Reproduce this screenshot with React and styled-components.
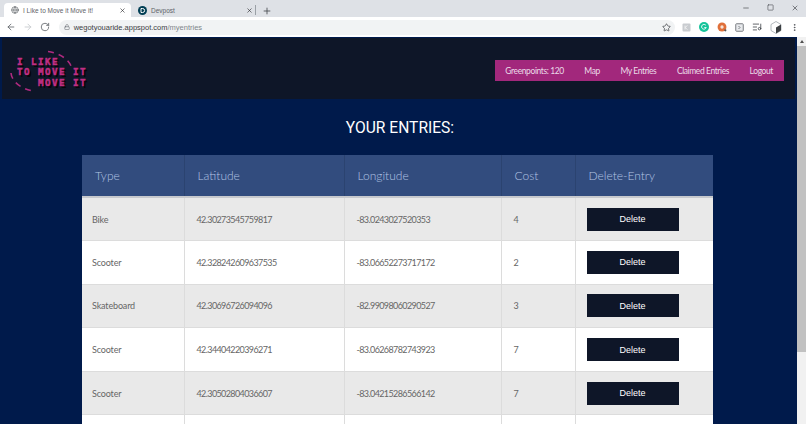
import React from "react";
import styled, { createGlobalStyle } from "styled-components";
import { Globe, X, Plus, ArrowLeft, ArrowRight, RotateCw, Lock, Star, Minus, Square, MoreVertical, ListMusic } from "lucide-react";

const GlobalStyle = createGlobalStyle`
  html, body {
    margin: 0;
    height: 100%;
    overflow: hidden;
    background: #001a4b;
    font-family: "Open Sans", sans-serif;
  }
  * { box-sizing: border-box; }
`;

const Window = styled.div`
  width: 806px;
  height: 424px;
  display: flex;
  flex-direction: column;
  overflow: hidden;
`;

const TabStrip = styled.div`
  height: 17px;
  background: #dee1e6;
  display: flex;
  align-items: flex-end;
  padding-left: 4px;
  color: #45484d;
  flex: none;
`;

const Tab = styled.div`
  width: 127px;
  height: 14px;
  padding: 0 5px 0 7px;
  display: flex;
  align-items: center;
  gap: 4px;
  border-radius: 4px 4px 0 0;
  background: ${(props) => (props.$active ? "#ffffff" : "transparent")};
  font-family: "Liberation Sans", sans-serif;
  font-size: 6.5px;
  color: #5f6368;
`;

const TabTitle = styled.span`
  flex: 1;
  white-space: nowrap;
`;

const TabDivider = styled.span`
  width: 1px;
  height: 10px;
  background: #9aa0a6;
  margin: 0 6px 2px -3px;
`;

const NewTab = styled.span`
  display: flex;
  margin-bottom: 1px;
`;

const WindowButtons = styled.div`
  margin-left: auto;
  align-self: flex-start;
  display: flex;
  gap: 17px;
  padding: 4px 7px 0 0;
`;

const Toolbar = styled.div`
  height: 20px;
  background: #ffffff;
  display: flex;
  align-items: center;
  padding: 0 7px 0 6px;
  gap: 7px;
  color: #5f6368;
  flex: none;
`;

const AddressBar = styled.div`
  width: 623px;
  height: 15px;
  margin-left: 2px;
  border-radius: 8px;
  background: #f1f3f4;
  display: flex;
  align-items: center;
  padding: 0 4px 0 5px;
  font-family: "Liberation Sans", sans-serif;
  font-size: 7.5px;
  gap: 4px;
  color: #3c4043;
`;

const UrlPath = styled.span`
  color: #80868b;
`;

const PushRight = styled.span`
  margin-left: auto;
  display: flex;
`;

const Extensions = styled.div`
  display: flex;
  align-items: center;
  gap: 8px;
`;

const Viewport = styled.div`
  flex: 1;
  display: flex;
  min-height: 0;
`;

const Page = styled.div`
  flex: 1;
  min-width: 0;
  background: #001a4b;
  padding-top: 1px;
`;

const Scrollbar = styled.div`
  width: 9px;
  flex: none;
  background: #f1f1f1;
  display: flex;
  flex-direction: column;
  align-items: center;
`;

const ScrollArrow = styled.span`
  height: 9px;
  width: 100%;
  display: flex;
  align-items: center;
  justify-content: center;

  &::before {
    content: "";
    border-left: 2.5px solid transparent;
    border-right: 2.5px solid transparent;
    border-bottom: 3px solid #505050;
  }
`;

const ScrollThumb = styled.span`
  width: 100%;
  height: 306px;
  background: #c1c1c1;
`;

const Header = styled.header`
  height: 61px;
  margin: 0 2px;
  background: #0e1628;
  display: flex;
  align-items: center;
  justify-content: space-between;
  padding: 0 11px 0 8px;
`;

const Logo = styled.div`
  position: relative;
  width: 84px;
  height: 48px;
  display: flex;
  flex-direction: column;
  padding: 12px 0 0 7px;
`;

const LogoRing = styled.svg`
  position: absolute;
  left: 0;
  top: 5px;
`;

const LogoLine = styled.span`
  position: relative;
  height: 10.7px;
  font-family: "DejaVu Sans Mono", monospace;
  font-weight: 700;
  font-size: 9.2px;
  line-height: 10.7px;
  letter-spacing: 1.46px;
  color: #c02f85;
  -webkit-text-stroke: 0.5px #c02f85;
  text-shadow: 1px 1px 0 #05060c, 2px 2px 0 #05060c;
  white-space: pre;
`;

const Nav = styled.nav`
  background: #a2287c;
  height: 21px;
  margin-top: 4px;
  display: flex;
  align-items: center;
  padding: 0 11px 0 10px;
  gap: 20.5px;
  font-family: "Lato", sans-serif;
  font-size: 8.5px;
  letter-spacing: -0.4px;
  color: #eadbe8;
`;

const Title = styled.h1`
  margin: 18px 0 0 3px;
  height: 22px;
  text-align: center;
  font-family: "Roboto", sans-serif;
  font-weight: 400;
  font-size: 15.6px;
  line-height: 22px;
  color: #ffffff;
`;

const Table = styled.table`
  margin: 16px 0 0 82px;
  width: 631px;
  border-collapse: collapse;
  table-layout: fixed;
  font-family: "Lato", sans-serif;
`;

const HeadCell = styled.th`
  height: 42px;
  padding: 0 0 0 13px;
  background: #324c7e;
  color: #b3c4e4;
  font-weight: 300;
  font-size: 12px;
  text-align: left;
  border-left: 1px solid #2b4370;
  border-bottom: 2px solid #c7c9cd;

  &:first-child {
    border-left: none;
  }
`;

const Row = styled.tr`
  background: ${(props) => (props.$shaded ? "#e9e9e9" : "#ffffff")};
`;

const Cell = styled.td`
  height: 43.6px;
  padding: 0 0 0 12px;
  font-size: 9px;
  font-weight: 400;
  letter-spacing: ${(props) => (props.$numeric ? "-0.6px" : "-0.15px")};
  color: #666666;
  border: 1px solid #dcdcdc;
  border-top: none;

  &:first-child {
    padding-left: 10px;
    border-left: none;
  }
  &:last-child {
    padding-left: 11px;
    border-right: none;
  }
`;

const DeleteButton = styled.button`
  display: block;
  width: 92px;
  height: 23px;
  border: none;
  padding: 0;
  background: #0e1628;
  color: #ffffff;
  font-family: "Liberation Sans", sans-serif;
  font-size: 9px;
`;

const entries = [
  ["Bike", "42.30273545759817", "-83.0243027520353", 4],
  ["Scooter", "42.328242609637535", "-83.06652273717172", 2],
  ["Skateboard", "42.30696726094096", "-82.99098060290527", 3],
  ["Scooter", "42.34404220396271", "-83.06268782743923", 7],
  ["Scooter", "42.30502804036607", "-83.04215286566142", 7],
  ["", "", "", ""],
];

const logoLines = ["I LIKE", "TO MOVE IT", "   MOVE IT"];

const DevpostIcon = () => (
  <svg width="9" height="9" viewBox="0 0 18 18">
    <circle cx="9" cy="9" r="9" fill="#003e54" />
    <path d="M6 5h3.2a4 4 0 0 1 0 8H6z" fill="none" stroke="#fff" strokeWidth="2" />
  </svg>
);

const StoreIcon = () => (
  <svg width="9" height="9" viewBox="0 0 18 18">
    <rect x="1" y="1" width="16" height="16" rx="2" fill="#c9ccd0" />
    <path d="M6 5v8M6 9l5-4M6 9l5 4" stroke="#f4f4f4" strokeWidth="1.6" fill="none" />
  </svg>
);

const GrammarlyIcon = () => (
  <svg width="10" height="10" viewBox="0 0 18 18">
    <circle cx="9" cy="9" r="9" fill="#15c39a" />
    <path d="M12.5 6.2A4.3 4.3 0 1 0 13 10H9.5" fill="none" stroke="#fff" strokeWidth="1.6" />
  </svg>
);

const OrangeIcon = () => (
  <svg width="10" height="10" viewBox="0 0 18 18">
    <circle cx="9" cy="9" r="8" fill="#e0703a" />
    <circle cx="9" cy="9" r="3" fill="#f7e3d6" />
    <circle cx="15" cy="15" r="2" fill="#555" />
  </svg>
);

const FrameIcon = () => (
  <svg width="9" height="9" viewBox="0 0 18 18" fill="none">
    <rect x="1.5" y="1.5" width="15" height="15" rx="1.5" fill="#e8eaed" stroke="#7a7d82" strokeWidth="2" />
    <path d="M7 6l3 3-3 3" stroke="#5f6368" strokeWidth="1.6" />
  </svg>
);

const HexIcon = () => (
  <svg width="12" height="13" viewBox="0 0 24 26">
    <path d="M12 1l10 6v12l-10 6-10-6V7z" fill="#fff" stroke="#9aa0a6" strokeWidth="1.5" />
    <path d="M12 13l10-6v12l-10 6z" fill="#3c4043" />
  </svg>
);

const App = () => (
  <>
    <GlobalStyle />
    <Window>
      <TabStrip>
        <Tab $active>
          <Globe size={8} />
          <TabTitle>I Like to Move it Move it!</TabTitle>
          <X size={7} color="#202124" />
        </Tab>
        <Tab>
          <DevpostIcon />
          <TabTitle>Devpost</TabTitle>
          <X size={7} color="#202124" />
        </Tab>
        <TabDivider />
        <NewTab>
          <Plus size={10} color="#45484d" />
        </NewTab>
        <WindowButtons>
          <Minus size={8} />
          <Square size={7} />
          <X size={8} />
        </WindowButtons>
      </TabStrip>
      <Toolbar>
        <ArrowLeft size={10} />
        <ArrowRight size={10} color="#c4c7cb" />
        <RotateCw size={10} />
        <AddressBar>
          <Lock size={6} color="#5f6368" />
          <span>
            wegotyouaride.appspot.com<UrlPath>/myentries</UrlPath>
          </span>
          <PushRight>
            <Star size={9} color="#45484d" />
          </PushRight>
        </AddressBar>
        <Extensions>
          <StoreIcon />
          <GrammarlyIcon />
          <OrangeIcon />
          <FrameIcon />
          <ListMusic size={10} color="#45484d" />
          <HexIcon />
          <MoreVertical size={9} color="#45484d" />
        </Extensions>
      </Toolbar>
      <Viewport>
        <Page>
          <Header>
            <Logo>
              <LogoRing width="66" height="44" viewBox="0 0 66 44" fill="none">
                <path
                  d="M38 1.5A31 20 0 0 1 61 16M1 23A31 20 0 0 0 23 41"
                  stroke="#b02a80"
                  strokeWidth="1.6"
                  strokeDasharray="6 5"
                />
              </LogoRing>
              {logoLines.map((line) => (
                <LogoLine key={line}>{line}</LogoLine>
              ))}
            </Logo>
            <Nav>
              <span>Greenpoints: 120</span>
              <span>Map</span>
              <span>My Entries</span>
              <span>Claimed Entries</span>
              <span>Logout</span>
            </Nav>
          </Header>
          <Title>YOUR ENTRIES:</Title>
          <Table>
            <colgroup>
              <col width="102" />
              <col width="160" />
              <col width="157" />
              <col width="74" />
              <col width="138" />
            </colgroup>
            <thead>
              <tr>
                <HeadCell>Type</HeadCell>
                <HeadCell>Latitude</HeadCell>
                <HeadCell>Longitude</HeadCell>
                <HeadCell>Cost</HeadCell>
                <HeadCell>Delete-Entry</HeadCell>
              </tr>
            </thead>
            <tbody>
              {entries.map(([type, lat, lng, cost], i) => (
                <Row key={i} $shaded={i % 2 === 0}>
                  <Cell>{type}</Cell>
                  <Cell $numeric>{lat}</Cell>
                  <Cell $numeric>{lng}</Cell>
                  <Cell $numeric>{cost}</Cell>
                  <Cell>{type && <DeleteButton>Delete</DeleteButton>}</Cell>
                </Row>
              ))}
            </tbody>
          </Table>
        </Page>
        <Scrollbar>
          <ScrollArrow />
          <ScrollThumb />
        </Scrollbar>
      </Viewport>
    </Window>
  </>
);

export default App;
